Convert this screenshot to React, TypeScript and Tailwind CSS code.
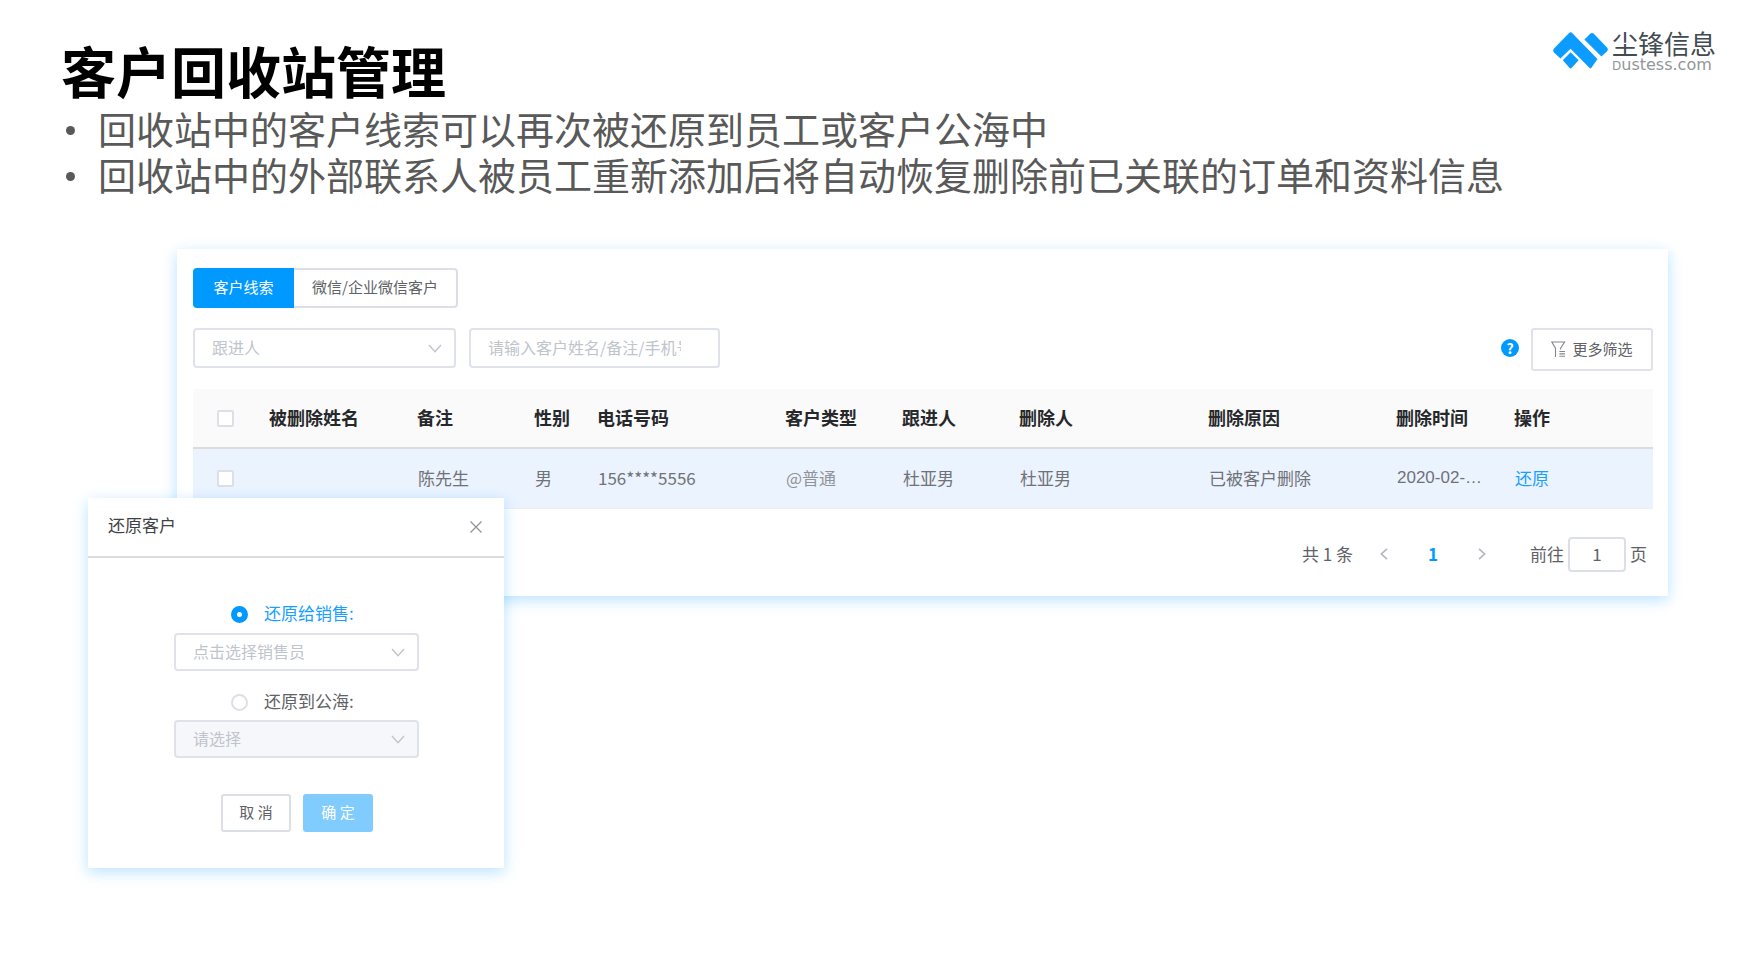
import type { ReactNode } from 'react';

const notes = [
  '回收站中的客户线索可以再次被还原到员工或客户公海中',
  '回收站中的外部联系人被员工重新添加后将自动恢复删除前已关联的订单和资料信息',
];

const columns = [
  { title: '被删除姓名', width: 'w-[148px]' },
  { title: '备注', width: 'w-[117px]' },
  { title: '性别', width: 'w-[63px]' },
  { title: '电话号码', width: 'w-[188px]' },
  { title: '客户类型', width: 'w-[117px]' },
  { title: '跟进人', width: 'w-[117px]' },
  { title: '删除人', width: 'w-[189px]' },
  { title: '删除原因', width: 'w-[188px]' },
  { title: '删除时间', width: 'w-[118px]' },
  { title: '操作', width: 'w-[139px]' },
];

function Logo() {
  return (
    <div className="flex items-start gap-1">
      <svg width="55" height="37" viewBox="0 0 55 37" fill="#0c9cff" aria-hidden="true" className="mt-1 shrink-0">
        <path d="M16.6 .6 Q17.6 -.3 18.6 .6 L44.5 27 L38.6 35.6 Q37.8 37 36.6 35.9 L17.6 16.8 L7.4 26.6 L1 20.4 Q-.6 18.4 1 16.4 Z" />
        <path d="M31.4 7.6 L37.2 1.8 Q39 .2 40.8 1.8 L54 15.4 Q55.6 17.4 54 19.2 L48.4 24.6 Z" />
        <path d="M17.6 20.2 L25.6 28.2 L18.8 35.8 Q17.6 37 16.4 35.8 L9.8 28.2 Z" />
      </svg>
      <div className="flex flex-col">
        <span className="text-[26px] leading-[30px] text-[#414b52]">尘锋信息</span>
        <span className="font-['DejaVu_Sans',sans-serif] text-[16px] leading-[14px] text-[#929698]">
          <span className="text-[12px]">D</span>ustess.com
        </span>
      </div>
    </div>
  );
}

function Chevron() {
  return (
    <svg width="14" height="9" viewBox="0 0 14 9" fill="none" stroke="#c0c4cc" strokeWidth="1.4" aria-hidden="true" className="pointer-events-none absolute inset-y-0 right-[14px] my-auto">
      <path d="M1 1 L7 7.6 L13 1" />
    </svg>
  );
}

function Picker({ label, placeholder, className, disabled }: { label: string; placeholder: string; className: string; disabled?: boolean }) {
  return (
    <div className={`relative ${className}`}>
      <select
        aria-label={label}
        disabled={disabled}
        className="h-full w-full appearance-none rounded-[4px] border-2 border-[#dfe2ea] bg-white pb-[2px] pl-[17px] pr-9 text-[16px] text-[#c0c4cc] opacity-100 disabled:bg-[#f5f7fa]"
      >
        <option>{placeholder}</option>
      </select>
      <Chevron />
    </div>
  );
}

function Box({ label }: { label: string }) {
  return (
    <input
      type="checkbox"
      aria-label={label}
      className="ml-6 block h-[17px] w-[17px] appearance-none rounded-[2px] border-2 border-[#dcdfe6] bg-white"
    />
  );
}

function RestoreOption({ id, checked, children }: { id: string; checked?: boolean; children: ReactNode }) {
  return (
    <div className="flex h-6 items-center gap-4 pl-[57px]">
      <input
        type="radio"
        name="restore"
        id={id}
        defaultChecked={checked}
        className="peer h-[17px] w-[17px] appearance-none rounded-full border-2 border-[#dcdfe6] bg-white checked:border-[6px] checked:border-[#0099ff]"
      />
      <label htmlFor={id} className="pb-[2px] text-[17px] leading-6 text-[#606266] peer-checked:text-[#1a9fff]">
        {children}
      </label>
    </div>
  );
}

function RestoreDialog() {
  return (
    <div
      role="dialog"
      aria-labelledby="restore-title"
      className="absolute left-[88px] top-[249px] w-[416px] bg-white pb-9 shadow-[0_4px_14px_rgba(0,153,255,0.28)]"
    >
      <div className="flex h-[60px] items-center justify-between border-b-2 border-[#dcdcdc] pl-5 pr-5">
        <h2 id="restore-title" className="pb-1 text-[17px] leading-6 text-[#404245]">还原客户</h2>
        <button type="button" aria-label="关闭" className="flex h-4 w-4 items-center justify-center">
          <svg width="12" height="12" viewBox="0 0 12 12" stroke="#909399" strokeWidth="1.3" aria-hidden="true">
            <path d="M.5 .5 L11.5 11.5 M11.5 .5 L.5 11.5" />
          </svg>
        </button>
      </div>
      <div className="px-[86px] pt-11">
        <RestoreOption id="to-sales" checked>还原给销售:</RestoreOption>
        <Picker label="销售员" placeholder="点击选择销售员" className="mt-[7px] h-[38px] w-[245px]" />
        <div className="mt-[19px]">
          <RestoreOption id="to-pool">还原到公海:</RestoreOption>
        </div>
        <Picker label="公海" placeholder="请选择" className="mt-[6px] h-[38px] w-[245px]" disabled />
      </div>
      <div className="mt-9 flex justify-center gap-3 pl-[2px]">
        <button type="button" className="h-[38px] w-[70px] rounded-[3px] border-2 border-[#dcdfe6] bg-white pb-[2px] text-[15px] text-[#606266]">取 消</button>
        <button type="button" className="h-[38px] w-[70px] rounded-[3px] bg-[#80ccff] pb-[2px] text-[15px] text-white">确 定</button>
      </div>
    </div>
  );
}

export default function App() {
  return (
    <main className="min-h-screen overflow-x-hidden bg-white pb-10 font-['Noto_Sans_CJK_SC','Noto_Sans',sans-serif]">
      <header className="flex items-start justify-between pl-[61px] pr-[34px] pt-7">
        <h1 className="pt-[9px] text-[55px] font-bold leading-[64px] text-black">客户回收站管理</h1>
        <Logo />
      </header>

      <ul className="mt-1 pl-[66px] text-[38px] leading-[46px] text-[#595959]">
        {notes.map((note) => (
          <li key={note} className="flex items-center gap-[23px]">
            <span className="mt-1 h-[9px] w-[9px] shrink-0 rounded-full bg-[#595959]" />
            <span>{note}</span>
          </li>
        ))}
      </ul>

      <div className="relative mt-[52px] pl-[177px] pr-[82px]">
        <section className="bg-white pb-6 pl-4 pr-[15px] pt-[19px] shadow-[0_4px_14px_rgba(0,153,255,0.28)]">
          <div className="flex h-10 text-[15px]">
            <button type="button" className="w-[101px] rounded-l-[4px] bg-[#0099ff] pb-[2px] text-white">客户线索</button>
            <button type="button" className="w-[164px] rounded-r-[4px] border-2 border-l-0 border-[#dcdfe6] bg-white pb-[2px] text-[#606266]">微信/企业微信客户</button>
          </div>

          <div className="mt-5 flex items-start gap-[13px]">
            <Picker label="跟进人" placeholder="跟进人" className="h-10 w-[263px]" />
            <input
              type="text"
              aria-label="搜索客户"
              placeholder="请输入客户姓名/备注/手机号"
              className="h-10 w-[251px] rounded-[4px] border-2 border-[#dfe2ea] bg-white pb-[2px] pl-[17px] pr-[37px] text-[16px] text-[#606266] placeholder:text-[#c0c4cc]"
            />
            <div className="ml-auto flex items-center gap-3">
              <button type="button" aria-label="帮助" className="mb-[3px] flex h-[18px] w-[18px] items-center justify-center rounded-full bg-[#0099ff] text-[14px] font-bold leading-none text-white">?</button>
              <button type="button" className="flex h-[43px] w-[122px] items-center justify-center gap-[6px] rounded-[3px] border-2 border-[#dfe2ea] bg-white text-[15px] text-[#606266]">
                <svg width="15" height="17" viewBox="0 0 15 17" fill="none" stroke="#83868b" strokeWidth="1.1" aria-hidden="true">
                  <path d="M4.5 16 V7.2 L.8 1 H13.6 L9.6 7.2 V8.6" />
                  <path d="M8.4 10.5 H14 M8.4 12.9 H14 M8.4 15.3 H14" />
                </svg>
                更多筛选
              </button>
            </div>
          </div>

          <table className="mt-[18px] w-full table-fixed border-collapse text-left">
            <thead>
              <tr className="h-[59px] border-b-2 border-[#dcdcdc] bg-[#fafafa]">
                <th className="w-[76px]"><Box label="全选" /></th>
                {columns.map((c) => (
                  <th key={c.title} className={`${c.width} whitespace-nowrap pb-[2px] text-[18px] font-bold text-[#26282b]`}>{c.title}</th>
                ))}
              </tr>
            </thead>
            <tbody>
              <tr className="h-[60px] border-b border-[#ebeef5] bg-[#ebf3ff] text-[17px] text-[#707276] [&>td+td]:pb-[2px] [&>td+td]:pl-px">
                <td><Box label="选择陈先生" /></td>
                <td />
                <td>陈先生</td>
                <td>男</td>
                <td>156****5556</td>
                <td className="text-[#909399]">@普通</td>
                <td>杜亚男</td>
                <td>杜亚男</td>
                <td>已被客户删除</td>
                <td className="font-['Liberation_Sans','Noto_Sans_CJK_SC',sans-serif]">2020-02-…</td>
                <td><a href="#restore" className="text-[#1a9fff]">还原</a></td>
              </tr>
            </tbody>
          </table>

          <nav aria-label="分页" className="mt-7 flex h-[35px] items-center justify-end pr-[6px] text-[17px] text-[#606266]">
            <span>共 1 条</span>
            <button type="button" aria-label="上一页" className="ml-[25px] flex h-5 w-3 items-center justify-center">
              <svg width="8" height="12" viewBox="0 0 8 12" fill="none" stroke="#b4b8c0" strokeWidth="1.7" aria-hidden="true"><path d="M7 .8 L1.4 6 L7 11.2" /></svg>
            </button>
            <button type="button" aria-current="page" className="w-[86px] font-bold text-[#0099ff]">1</button>
            <button type="button" aria-label="下一页" className="flex h-5 w-3 items-center justify-center">
              <svg width="8" height="12" viewBox="0 0 8 12" fill="none" stroke="#b4b8c0" strokeWidth="1.7" aria-hidden="true"><path d="M1 .8 L6.6 6 L1 11.2" /></svg>
            </button>
            <label htmlFor="page" className="ml-[42px]">前往</label>
            <input id="page" type="text" defaultValue="1" className="mx-1 h-[35px] w-[58px] rounded-[4px] border-2 border-[#dcdfe6] bg-white pb-[2px] text-center text-[17px] text-[#606266]" />
            <span>页</span>
          </nav>
        </section>

        <RestoreDialog />
      </div>
    </main>
  );
}
